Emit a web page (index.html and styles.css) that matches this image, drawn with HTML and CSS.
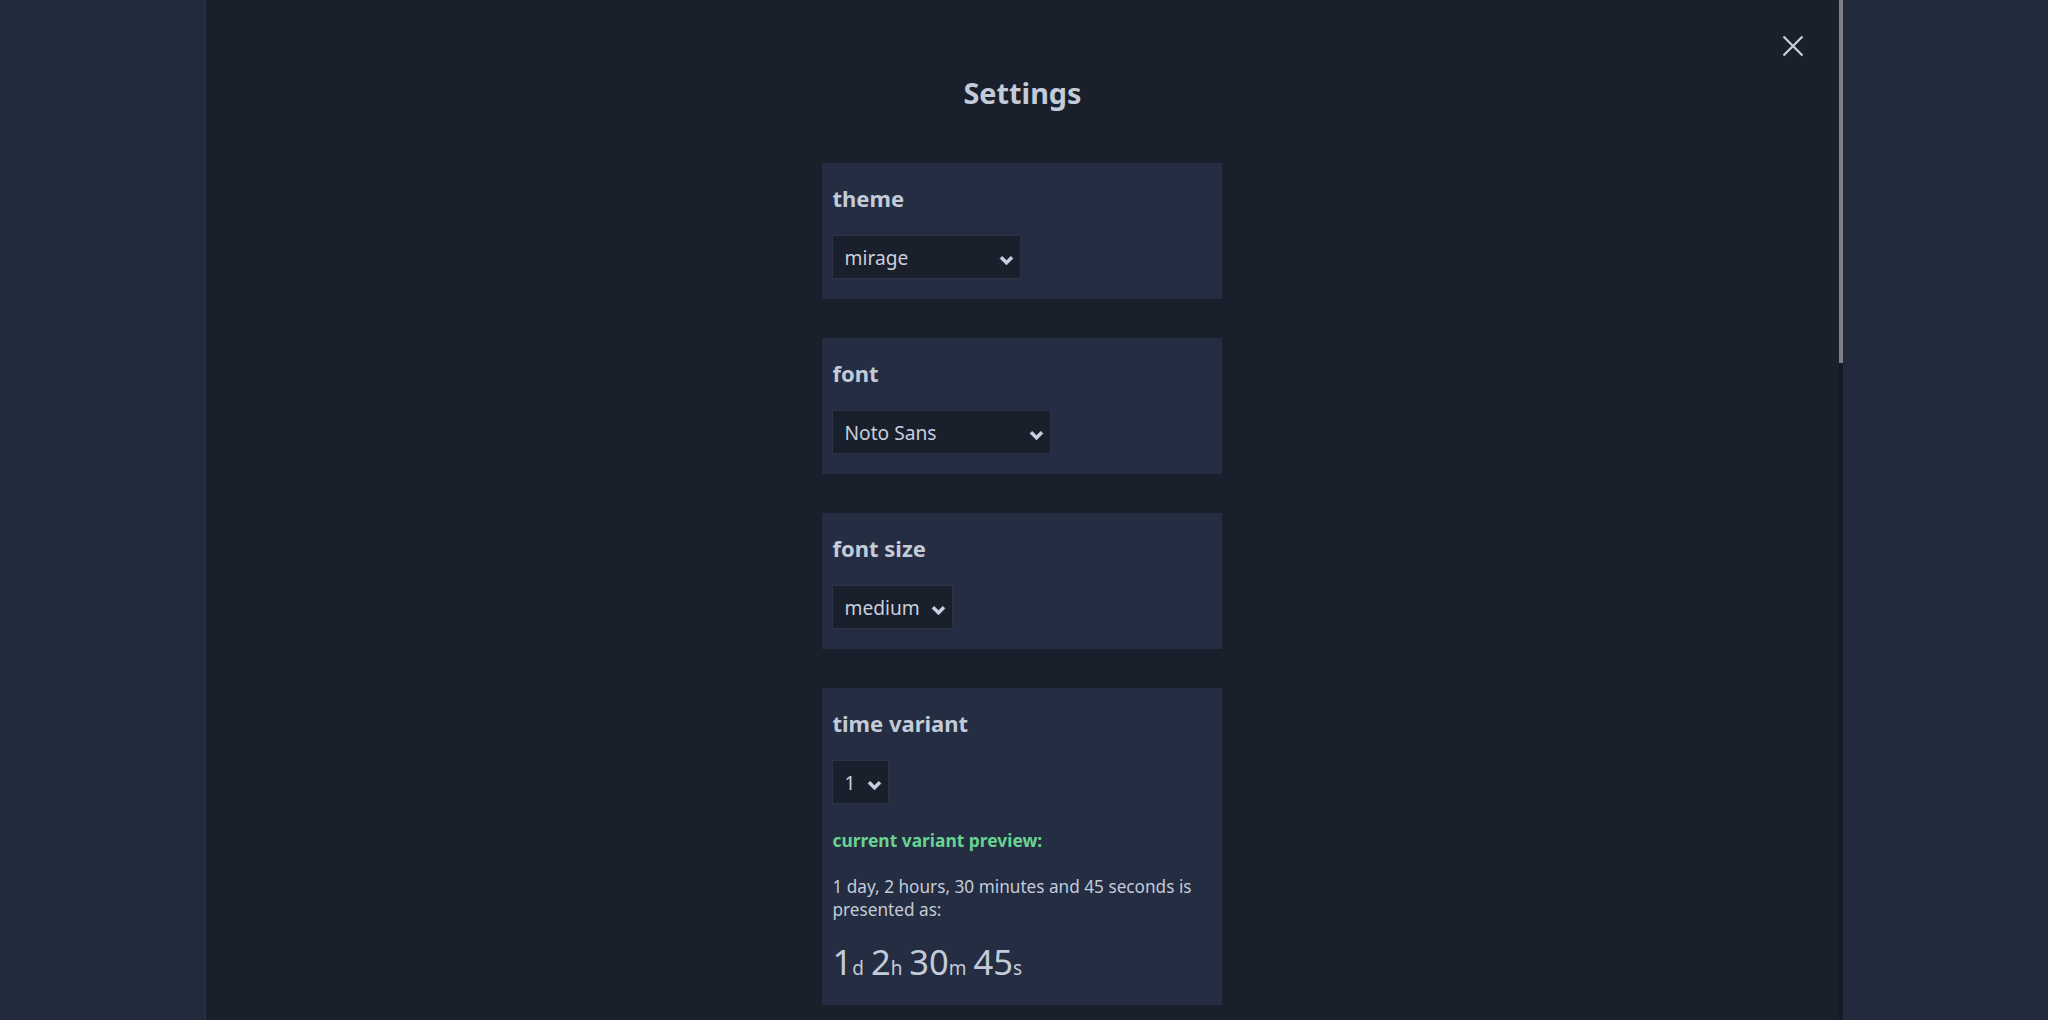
FILE: index.html
```html
<!DOCTYPE html>
<html lang="en">
<head>
<meta charset="utf-8">
<title>Settings</title>
<link rel="stylesheet" href="styles.css">
</head>
<body>
<div class="backdrop">
  <div class="modal">
    <div class="pane">
      <button class="close" aria-label="close">
        <svg viewBox="0 0 22 22" width="22" height="22"><path d="M1.5 1.5 L20.5 20.5 M20.5 1.5 L1.5 20.5" stroke="currentColor" stroke-width="2.2" fill="none"/></svg>
      </button>
      <div class="content">
        <h1 class="title">Settings</h1>

        <section class="card">
          <h3 class="label">theme</h3>
          <div class="select w-theme"><span>mirage</span>
            <svg class="chev" viewBox="0 0 15 10"><path d="M0.3 2.7 L2.7 0.3 L7.5 5.1 L12.3 0.3 L14.7 2.7 L7.5 9.9 Z" fill="currentColor" stroke="currentColor" stroke-width="0.6" stroke-linejoin="round"/></svg>
          </div>
        </section>

        <section class="card">
          <h3 class="label">font</h3>
          <div class="select w-font"><span>Noto Sans</span>
            <svg class="chev" viewBox="0 0 15 10"><path d="M0.3 2.7 L2.7 0.3 L7.5 5.1 L12.3 0.3 L14.7 2.7 L7.5 9.9 Z" fill="currentColor" stroke="currentColor" stroke-width="0.6" stroke-linejoin="round"/></svg>
          </div>
        </section>

        <section class="card">
          <h3 class="label">font size</h3>
          <div class="select w-size"><span>medium</span>
            <svg class="chev" viewBox="0 0 15 10"><path d="M0.3 2.7 L2.7 0.3 L7.5 5.1 L12.3 0.3 L14.7 2.7 L7.5 9.9 Z" fill="currentColor" stroke="currentColor" stroke-width="0.6" stroke-linejoin="round"/></svg>
          </div>
        </section>

        <section class="card">
          <h3 class="label">time variant</h3>
          <div class="select w-variant"><span>1</span>
            <svg class="chev" viewBox="0 0 15 10"><path d="M0.3 2.7 L2.7 0.3 L7.5 5.1 L12.3 0.3 L14.7 2.7 L7.5 9.9 Z" fill="currentColor" stroke="currentColor" stroke-width="0.6" stroke-linejoin="round"/></svg>
          </div>
          <p class="preview-title">current variant preview:</p>
          <p class="preview-desc">1 day, 2 hours, 30 minutes and 45 seconds is presented as:</p>
          <p class="preview-time">1<small>d</small> 2<small>h</small> 30<small>m</small> 45<small>s</small></p>
        </section>
      </div>
    </div>
    <div class="scrollbar"><div class="thumb"></div></div>
  </div>
</div>
</body>
</html>
```

FILE: styles.css
```css
* { box-sizing: border-box; }

html, body {
  margin: 0;
  padding: 0;
  height: 100%;
}

body {
  background: #222a3d;
  font-family: "Noto Sans", "Open Sans", sans-serif;
  color: #c3cbd9;
  overflow: hidden;
}

.backdrop {
  height: 100vh;
  display: flex;
  justify-content: center;
}

.modal {
  width: 80%;
  height: 100vh;
  display: flex;
  background: #1a1f2c;
  border-left: 1px solid #29334c;
}

.pane {
  position: relative;
  flex: 1;
  overflow: hidden;
}

.scrollbar {
  width: 4px;
  flex: none;
  background: #161a24;
}
.thumb {
  height: 363px;
  background: #7d8088;
}

.close {
  position: absolute;
  top: 35px;
  right: 35px;
  width: 22px;
  height: 22px;
  padding: 0;
  border: 0;
  background: transparent;
  color: #c9d1de;
  cursor: pointer;
}
.close svg { display: block; }

.content {
  display: flex;
  flex-direction: column;
  align-items: center;
  padding-top: 73px;
}

.title {
  margin: 0 0 51px;
  font-size: 28.8px;
  font-weight: 700;
  line-height: normal;
  color: #c3cbd9;
}

.card {
  width: 400px;
  background: #242d41;
  padding: 20px 10px 20px;
  margin-bottom: 39px;
}

.label {
  margin: 0 0 22px;
  font-size: 22px;
  font-weight: 700;
  line-height: 30px;
  color: #c3cbd9;
}

.select {
  display: flex;
  align-items: center;
  justify-content: space-between;
  height: 44px;
  padding: 1px 6px 0 11px;
  background: #1a1f2c;
  border: 1px solid #2b3447;
  font-size: 19.2px;
  color: #c8d0dd;
}

.chev {
  width: 15px;
  height: 9px;
  margin-top: 5px;
  color: #c8d1df;
  flex: none;
}

.w-theme { width: 189px; }
.w-font { width: 219px; }
.w-size { width: 121px; }
.w-variant { width: 57px; }

.preview-title {
  margin: 25px 0 0;
  font-size: 17.4px;
  font-weight: 700;
  line-height: 23px;
  color: #68d391;
}

.preview-desc {
  margin: 24px 0 0;
  font-size: 17.2px;
  line-height: 22.7px;
  color: #c3cbd9;
}

.preview-time {
  margin: 17px 0 0;
  font-size: 34.5px;
  line-height: 47px;
  word-spacing: -2px;
  color: #c3cbd9;
}
.preview-time small {
  font-size: 19px;
  line-height: 1;
  word-spacing: 0;
}
```
